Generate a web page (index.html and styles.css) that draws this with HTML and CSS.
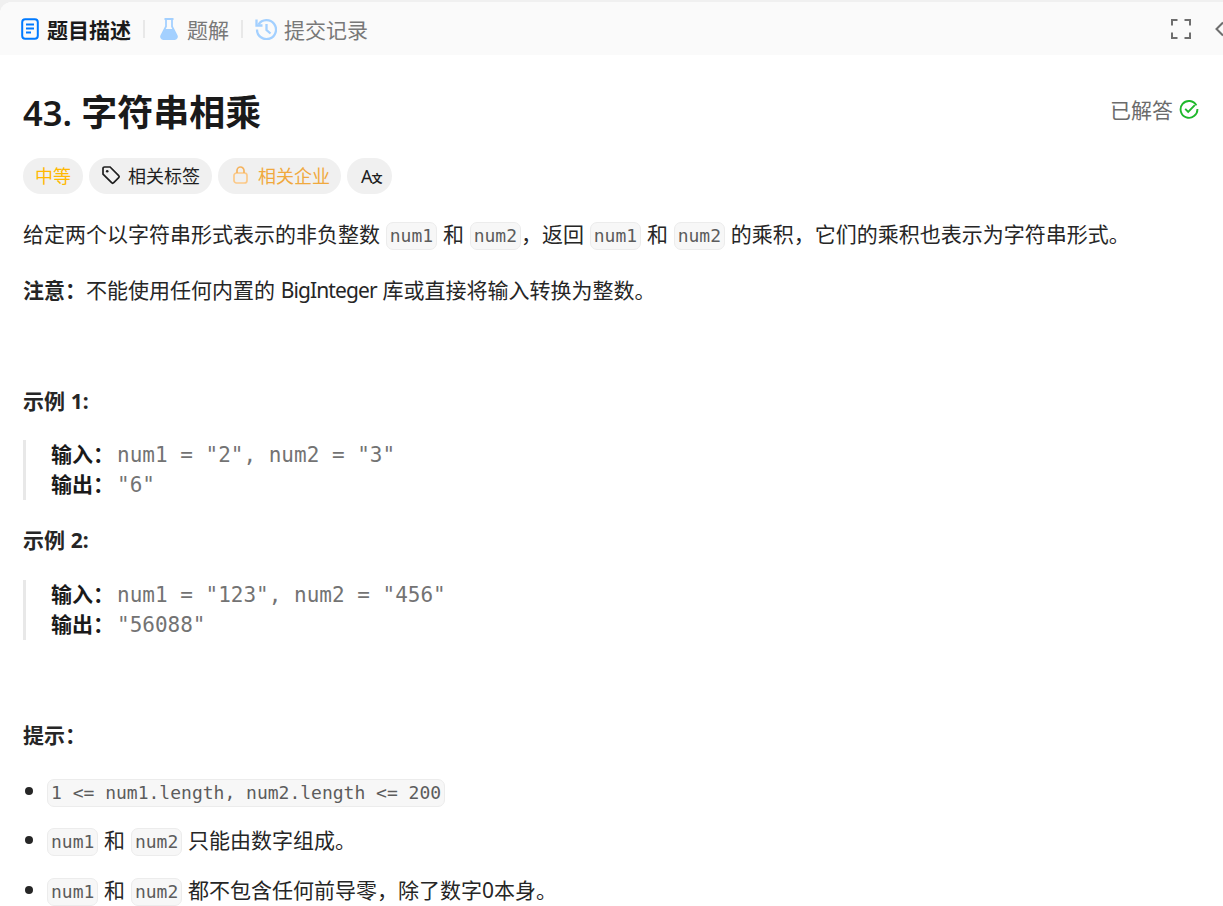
FILE: index.html
```html
<!DOCTYPE html>
<html lang="zh-CN">
<head>
<meta charset="utf-8">
<title>43. 字符串相乘</title>
<link rel="stylesheet" href="styles.css">
</head>
<body>
<div class="panel">
  <nav class="tabs">
    <div class="tab active">
      <svg class="tab-icon" viewBox="0 0 18 22" width="18" height="22"><rect x="1.2" y="1.2" width="15.6" height="19.6" rx="3" fill="none" stroke="#007aff" stroke-width="2"/><path d="M5 6.500h8M5 10.500h8M5 14.500h5" stroke="#007aff" stroke-width="2" fill="none"/></svg>
      <span>题目描述</span>
    </div>
    <i class="sep"></i>
    <div class="tab flask">
      <svg class="tab-icon" viewBox="0 0 18 22" width="18" height="22"><path d="M4.500 1h9M6 1v7.500L1.300 17.600C.6 19.200 1.600 21 3.400 21h11.200c1.800 0 2.800-1.800 2.100-3.400L12 8.500V1" fill="none" stroke="#a3d0ff" stroke-width="1.800"/><path d="M4.800 11h8.400l3.500 7c.6 1.400-.3 3-1.900 3H3.200c-1.600 0-2.500-1.600-1.900-3z" fill="#a3d0ff"/></svg>
      <span>题解</span>
    </div>
    <i class="sep sep-tight"></i>
    <div class="tab history">
      <svg class="tab-icon" viewBox="0 0 22 22" width="22" height="22"><path d="M3.500 6.500A9.500 9.500 0 1 1 2 11.500" fill="none" stroke="#a3d0ff" stroke-width="2.300"/><path d="M1.500 1.500v6h6" fill="none" stroke="#a3d0ff" stroke-width="2.300"/><path d="M11.500 6v6l4 3.500" fill="none" stroke="#a3d0ff" stroke-width="2.300"/></svg>
      <span>提交记录</span>
    </div>
    <div class="tab-tools">
      <svg viewBox="0 0 20 20" width="20" height="20"><path d="M1 6.500V1h5.500M13.500 1H19v5.500M19 13.500V19h-5.500M6.500 19H1v-5.500" fill="none" stroke="#6e6e6e" stroke-width="2"/></svg>
      <svg viewBox="0 0 9 16" width="9" height="16"><path d="M8 1.500 1.500 8 8 14.500" fill="none" stroke="#6e6e6e" stroke-width="2"/></svg>
    </div>
  </nav>

  <main class="content">
    <header class="title-row">
      <h1><span class="h-num">43.</span> 字符串相乘</h1>
      <div class="solved">已解答
        <svg viewBox="0 0 20 20" width="20" height="20"><path d="M17.400 6.400A8.400 8.400 0 1 0 18.400 10" fill="none" stroke="#1fb82c" stroke-width="1.900"/><path d="M6.200 9.800l3 3 6.600-6.600" fill="none" stroke="#1fb82c" stroke-width="1.900"/></svg>
      </div>
    </header>

    <div class="chips">
      <span class="chip medium">中等</span>
      <span class="chip tag">
        <svg viewBox="0 0 20 20" width="20" height="20"><path d="M2 3.500C2 2.700 2.700 2 3.500 2h5.600l8.600 8.600c.6.6.6 1.500 0 2.100l-5 5c-.6.6-1.500.6-2.100 0L2 9.100z" fill="none" stroke="#1f1f1f" stroke-width="1.700"/><circle cx="6.200" cy="6.200" r="1.300" fill="#1f1f1f"/></svg>
        相关标签
      </span>
      <span class="chip locked">
        <svg viewBox="0 0 15 18" width="15" height="18"><rect x="1" y="7" width="13" height="10" rx="2.500" fill="none" stroke="#fbc988" stroke-width="1.700"/><path d="M4 7V4.500a3.500 3.500 0 0 1 7 0V7" fill="none" stroke="#f5b35e" stroke-width="1.700"/></svg>
        相关企业
      </span>
      <span class="chip icon-only">A<span class="small-x">文</span></span>
    </div>

    <p class="para">给定两个以字符串形式表示的非负整数 <code>num1</code> 和 <code>num2</code>，返回 <code>num1</code> 和 <code>num2</code> 的乘积，它们的乘积也表示为字符串形式。</p>
    <p class="para note"><strong>注意：</strong>不能使用任何内置的 <span class="latin">BigInteger</span> 库或直接将输入转换为整数。</p>

    <p class="para first"><strong>示例 1:</strong></p>
    <pre class="example"><strong>输入：</strong>num1 = "2", num2 = "3"
<strong>输出：</strong>"6"</pre>

    <p class="para"><strong>示例 2:</strong></p>
    <pre class="example second"><strong>输入：</strong>num1 = "123", num2 = "456"
<strong>输出：</strong>"56088"</pre>

    <p class="para hint-title"><strong>提示：</strong></p>
    <ul class="hints">
      <li><code>1 &lt;= num1.length, num2.length &lt;= 200</code></li>
      <li><code>num1</code> 和 <code>num2</code> 只能由数字组成。</li>
      <li><code>num1</code> 和 <code>num2</code> 都不包含任何前导零，除了数字0本身。</li>
    </ul>
  </main>
</div>
</body>
</html>
```
FILE: styles.css
```css
* { box-sizing: border-box; }
html, body { margin: 0; height: 100%; overflow: hidden; background: #f0f0f0; }
body {
  font-family: "Noto Sans", "Noto Sans CJK SC", sans-serif;
  color: #262626;
  padding-top: 2px;
}
.panel { background: #fff; border-radius: 12px 0 0 0; height: 904px; overflow: hidden; }
.tabs {
  display: flex;
  align-items: center;
  height: 53px;
  background: #fafafa;
  padding-left: 21px;
  font-size: 21px;
  color: #787878;
}
.tab { display: flex; align-items: center; gap: 8px; white-space: nowrap; }
.tab.active { color: #1a1a1a; font-weight: 700; }
.tab.flask { gap: 9px; }
.tab.history { gap: 7px; }
.tab-icon { flex: none; }
.sep { width: 2px; height: 18px; background: #e8e8e8; margin: 0 15px 0 12px; }
.sep-tight { margin-right: 12px; }
.tab-tools { margin-left: auto; display: flex; align-items: center; gap: 24px; margin-right: -1px; }
.content { padding: 0 24px 0 23px; }
.title-row { display: flex; justify-content: space-between; align-items: center; height: 44px; margin-top: 36px; }
h1 { margin: 0; font-size: 36px; line-height: 44px; font-weight: 700; color: #1a1a1a; white-space: nowrap; }
.h-num { font-size: 34.500px; font-weight: 600; }
.solved { display: flex; align-items: center; gap: 6px; font-size: 21px; color: #6b6b6b; padding-bottom: 8px; }
.chips { display: flex; gap: 6px; margin-top: 23px; }
.chip {
  display: flex; align-items: center;
  height: 36px; padding: 0 12px 2px;
  border-radius: 18px;
  background: #f0f0f0;
  font-size: 18px;
  color: #1f1f1f;
  white-space: nowrap;
}
.chip.medium { color: #ffb800; }
.chip.tag { gap: 7px; }
.chip.locked { color: #f0a93e; gap: 10px; padding-left: 15px; padding-right: 11px; }
.chip.icon-only { font-size: 18px; padding: 0 9px 0 14px; }
.small-x { font-size: 11px; font-weight: 700; margin: 3px 0 0 -1px; }
.para { margin: 0; font-size: 21px; line-height: 32px; color: #262626; white-space: nowrap; word-spacing: 0.300px; }
.chips + .para { margin-top: 24px; }
.note { margin-top: 24px; }
.para strong { font-weight: 700; }
.latin { letter-spacing: -0.900px; }
.first { margin-top: 79px; }
code {
  display: inline-block;
  font-family: "DejaVu Sans Mono", monospace;
  font-size: 18px;
  line-height: 26px;
  padding: 0 3px;
  background: #f7f7f7;
  border: 1.500px solid #ececec;
  border-radius: 7px;
  color: #5c5c5c;
  word-spacing: 0;
}
.example {
  margin: 23px 0 24px;
  padding: 0 0 0 25px;
  border-left: 3px solid #e8e8e8;
  font-family: "DejaVu Sans Mono", "Noto Sans CJK SC", monospace;
  font-size: 21px;
  line-height: 30px;
  color: #737373;
}
.example.second { margin-top: 24px; }
.example strong {
  font-family: "Noto Sans", "Noto Sans CJK SC", sans-serif;
  line-height: 1;
  color: #1a1a1a;
  font-weight: 700;
  margin-right: 3px;
}
.hint-title { margin-top: 79px; }
.hints { margin: 24px 0 0; padding: 0 0 0 24px; font-size: 21px; line-height: 32px; word-spacing: 0.300px; list-style: none; }
.hints li { position: relative; margin-bottom: 17px; white-space: nowrap; }
.hints li:nth-child(2) { margin-bottom: 18px; }
.hints li::before {
  content: "";
  position: absolute;
  left: -22px;
  top: 50%;
  width: 8px;
  height: 8px;
  margin-top: -4px;
  border-radius: 50%;
  background: #262626;
}
```
